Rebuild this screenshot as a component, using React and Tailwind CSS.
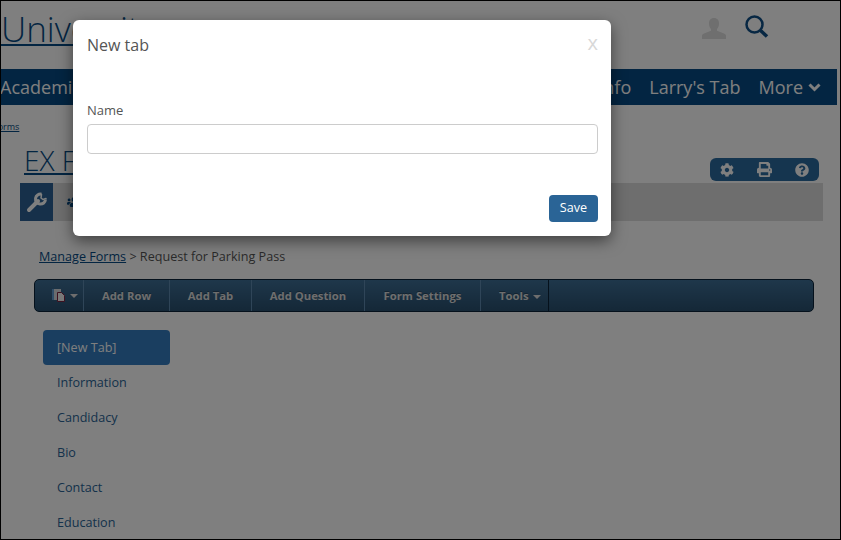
import { FaCog, FaPrint, FaQuestionCircle, FaUsers } from "react-icons/fa";

const navItems = ["Academics", "Admissions", "Campus Life"];
const toolbarItems = [
  ["Add Row", "w-[86px]"],
  ["Add Tab", "w-[82px]"],
  ["Add Question", "w-[113px]"],
  ["Form Settings", "w-[116px]"],
];
const tabs = ["Information", "Candidacy", "Bio", "Contact", "Education"];

function PageIcon() {
  return (
    <svg width="14" height="13" viewBox="0 0 14 13">
      <path d="M0 0h9v11H0z" fill="#d4d8dc" />
      <path d="M0 0h2v11H0z" fill="#5f9ad0" />
      <path d="M5.500 3.500h4l3 3v6h-7z" fill="#f0f0f0" stroke="#7a2340" />
    </svg>
  );
}

function UserIcon() {
  return (
    <svg width="24" height="21" viewBox="0 0 24 21" className="mt-[3px]">
      <path
        d="M12 0c3.400 0 5 2.400 5 5.400 0 2.300-.8 4.300-2 5.600v1.800l7 2.700c1.300.5 2 1.300 2 2.500V21H0v-3c0-1.200.7-2 2-2.500l7-2.700V11C7.800 9.700 7 7.700 7 5.400 7 2.400 8.600 0 12 0z"
        fill="#dedede"
      />
    </svg>
  );
}

function SearchIcon() {
  return (
    <svg width="24" height="23" viewBox="0 0 24 23" fill="none" stroke="#0f4f86">
      <circle cx="9.500" cy="9.500" r="8" strokeWidth="2.500" />
      <path d="M15.500 15.500L22 21.500" strokeWidth="3.500" />
    </svg>
  );
}

function WrenchIcon() {
  return (
    <svg width="22" height="22" viewBox="0 0 22 22" fill="none" stroke="#fff" strokeLinecap="round">
      <path d="M3 19L12 10" strokeWidth="4" />
      <path d="M15.500 3.200A5 5 0 1 0 19.500 8.500" strokeWidth="3" strokeLinecap="butt" />
      <path d="M15.500 3.500L15 7L17 8.500L20 7.500" strokeWidth="1.500" />
    </svg>
  );
}

function ChevronIcon() {
  return (
    <svg width="13" height="9" viewBox="0 0 13 9" fill="none" stroke="#fff" strokeWidth="3">
      <path d="M1.500 1.500L6.500 6.500L11.500 1.500" />
    </svg>
  );
}

function Caret() {
  return <span className="ml-[4px] inline-block border-x-[4px] border-t-[4px] border-x-transparent border-t-[#ddd]" />;
}

export default function App() {
  return (
    <div className="relative w-[841px] h-[540px] overflow-hidden border border-black bg-white font-['Open_Sans',sans-serif] text-[12.600px] text-[#555]">
      {/* page behind the dialog */}
      <div className="w-[836px]">
        <header className="flex h-[68px] items-start justify-between">
          <a className="mt-[5px] text-[35px] font-light leading-[46px] text-[#064b84] underline decoration-2 underline-offset-2">University</a>
          <div className="mr-[68px] mt-[14px] flex items-start gap-[19px]">
            <UserIcon />
            <SearchIcon />
          </div>
        </header>
        <nav className="flex h-[36px] items-center justify-between bg-[#064b84] pr-[16px] text-[18px] text-white">
          <div className="-ml-px flex gap-[18px]">
            {navItems.map((item) => (
              <span key={item}>{item}</span>
            ))}
          </div>
          <div className="flex items-center gap-[18px]">
            <span>Contact Info</span>
            <span>Larry's Tab</span>
            <span className="flex items-center gap-[5px]">
              More
              <ChevronIcon />
            </span>
          </div>
        </nav>
        <div className="-ml-[8px] h-[29px] pt-[15px] text-[9px] leading-[14px] text-[#064b84] underline">Forms</div>
        <div className="flex h-[49px] items-start justify-between pl-[23px] pr-[18px]">
          <a className="mt-[7px] text-[28px] font-light leading-[38px] text-[#064b84] underline">EX Forms</a>
          <div className="mt-[24px] flex h-[23px] w-[109px] items-center justify-between rounded-[6px] bg-[#2a6a9e] px-[10px] text-[14px] text-white">
            <FaCog />
            <FaPrint className="text-[15px]" />
            <FaQuestionCircle />
          </div>
        </div>
        <div className="ml-[19px] mr-[14px] flex h-[38px] bg-[#dcdcdc]">
          <div className="flex w-[33px] items-center justify-center bg-[#2c6194]">
            <WrenchIcon />
          </div>
          <FaUsers className="ml-[14px] mt-[12px] text-[14px] text-[#064b84]" />
        </div>
        <div className="ml-[38px] mt-[27px] h-[17px] leading-[18px]">
          <a className="text-[#064b84] underline">Manage Forms</a>
          <span className="text-[#555]"> &gt; Request for Parking Pass</span>
        </div>
        <div className="ml-[33px] mr-[23px] mt-[14px] flex h-[33px] rounded-[5px] border border-[#0a2338] bg-gradient-to-b from-[#3e6f96] to-[#29506f] pt-[2px] text-[11.300px] font-bold text-[#ddd] [text-shadow:0_-1px_0_rgba(0,0,0,0.3)]">
          <div className="-mt-[2px] flex w-[49px] items-center justify-end border-r border-[#5f8bb0] pr-[5px]">
            <PageIcon />
            <Caret />
          </div>
          {toolbarItems.map(([label, width]) => (
            <div key={label} className={`-mt-[2px] flex items-center justify-center border-r border-[#5f8bb0] pt-[2px] ${width}`}>
              {label}
            </div>
          ))}
          <div className="-mt-[2px] flex w-[68px] items-center border-r border-[#0a2338] pl-[18px] pt-[2px]">
            Tools
            <Caret />
          </div>
        </div>
        <div className="ml-[42px] mt-[18px] w-[127px]">
          <div className="flex h-[35px] items-center rounded-[4px] bg-[#347cc0] pl-[14px] pt-[2px] text-white">[New Tab]</div>
          {tabs.map((tab) => (
            <div key={tab} className="flex h-[35px] items-center pl-[14px] pt-[2px] text-[#2a6496]">
              {tab}
            </div>
          ))}
        </div>
      </div>

      {/* backdrop */}
      <div className="absolute inset-0 bg-black/50" />

      {/* dialog */}
      <div className="absolute left-[72px] top-[19px] flex h-[216px] w-[538px] flex-col rounded-[6px] bg-white pl-[14px] pr-[13px] shadow-[0_5px_15px_rgba(0,0,0,0.5)]">
        <div className="mt-[14px] flex h-[22px] items-start justify-between">
          <h2 className="text-[16px] leading-[22px] text-[#555]">New tab</h2>
          <span className="text-[20px] leading-[18px] text-[#d8d8d8]">x</span>
        </div>
        <label className="mt-[45px] text-[13px] font-medium leading-[18px]">Name</label>
        <input className="mt-[5px] h-[30px] w-full rounded-[4px] border border-[#ccc] bg-white px-3 outline-none" />
        <div className="mt-[41px] flex justify-end">
          <button className="h-[27px] w-[49px] rounded-[4px] bg-[#2a6496] text-white">Save</button>
        </div>
      </div>
    </div>
  );
}
